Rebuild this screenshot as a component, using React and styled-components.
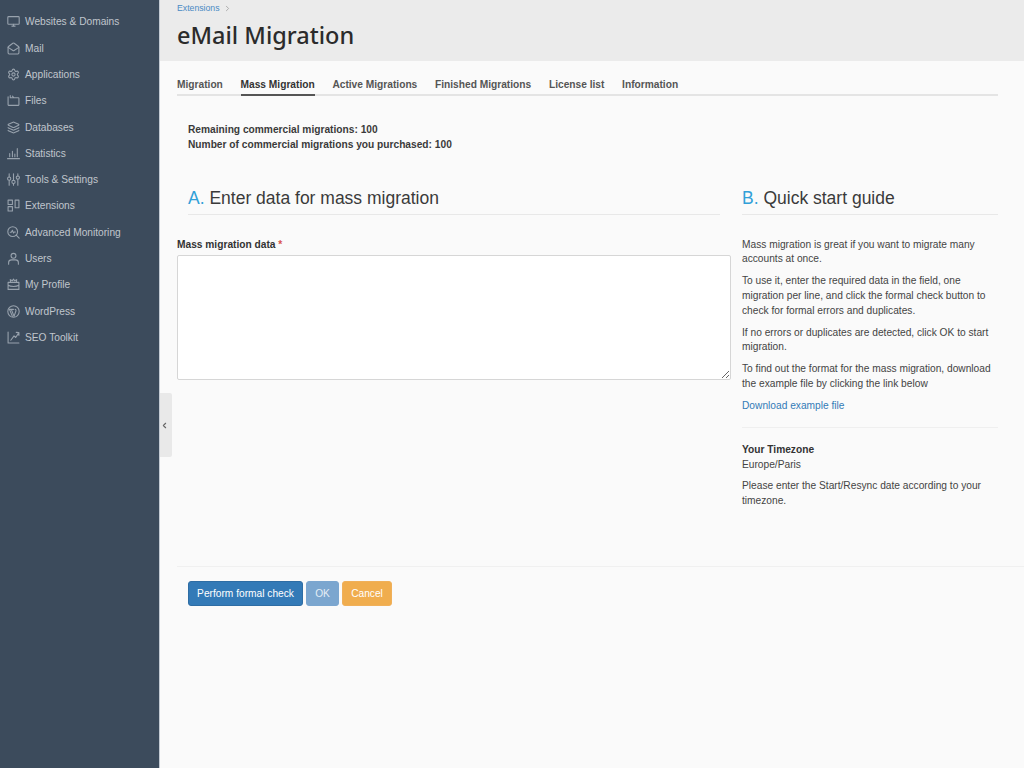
import React from "react";
import styled, { createGlobalStyle } from "styled-components";
import { MailOpen, Settings, Layers, ChevronLeft, ChevronRight } from "lucide-react";

const Global = createGlobalStyle`
  html, body { margin: 0; padding: 0; height: 100%; }
  body { font-family: "Liberation Sans", Arial, sans-serif; font-size: 10.2px; color: #333; background: #fafafa; }
  #root { height: 100%; }
  * { box-sizing: border-box; }
`;
const Page = styled.div`display: flex; width: 1024px; height: 768px; overflow: hidden; position: relative;`;
const Sidebar = styled.nav`
  width: 160px; flex: none; background: #3c4b5c; border-right: 1px solid #c3cad3; padding-top: 8.7px;
  display: flex; flex-direction: column;
`;
const NavItem = styled.a`
  height: 26.3px; display: flex; align-items: center; gap: 5px; padding-left: 7px;
  color: #c0c6cd; font-size: 10.2px; white-space: nowrap;
  svg { color: #98a2ad; flex: none; width: 13px; height: 13px; }
`;
const Main = styled.main`flex: 1; min-width: 0; display: flex; flex-direction: column; position: relative;`;
const Header = styled.header`height: 61px; background: #ebebeb; padding: 3px 17px 0; flex: none;`;
const Crumb = styled.div`
  height: 10px; display: flex; align-items: center; gap: 3px; font-size: 8.7px; color: #4a8ac4;
  svg { color: #999; width: 9px; height: 9px; }
`;
const Title = styled.h1`
  margin: 6px 0 0; font-family: "Noto Sans", "Open Sans", sans-serif; font-weight: 500; font-size: 23.5px; line-height: 32px; color: #2b2b2b;
`;
const Tabs = styled.div`
  display: flex; gap: 17.7px; margin: 16px 26px 0 17px; height: 19px; border-bottom: 2px solid #e4e4e4;
`;
const Tab = styled.a`
  height: 19px; font-weight: 700; font-size: 10.2px; line-height: 16px; color: ${p => (p.$active ? "#333" : "#555")};
  border-bottom: 2px solid ${p => (p.$active ? "#555" : "transparent")}; white-space: nowrap;
`;
const Notice = styled.div`margin: 26px 0 0 28px; font-weight: 700; font-size: 10.2px; line-height: 15px; color: #3a3a3a;`;
const Columns = styled.div`display: flex; margin-top: 34px; padding-left: 17px;`;
const Left = styled.section`width: 554px; flex: none;`;
const Right = styled.aside`width: 256px; margin-left: 11px; flex: none; font-size: 10.2px; line-height: 14.7px; color: #444;`;
const SectionTitle = styled.h2`
  margin: 0; height: 29px; font-weight: 400; font-size: 17.5px; line-height: 24px; color: #3a3a3a; border-bottom: 1px solid #e8e8e8;
  margin-left: ${p => p.$inset || 0}px; margin-right: ${p => p.$inset || 0}px;
  span { color: #31a0d8; }
`;
const FieldLabel = styled.label`display: block; margin-top: 23px; height: 17px; font-weight: 700; font-size: 10.2px; line-height: 14px; color: #333; b { color: #d9534f; }`;
const Area = styled.textarea`
  display: block; width: 554px; height: 125px; background: #fff; border: 1px solid #d6d6d6; border-radius: 2px; resize: vertical;
`;
const Guide = styled.div`margin-top: 22.6px; p { margin: 0 0 7.3px; }`;
const GuideLink = styled.a`color: #337ab7; display: block; margin-top: 6px;`;
const Rule = styled.div`height: 1px; background: #efefef; margin: 13.3px 0 15px;`;
const TzTitle = styled.div`font-weight: 700; color: #333;`;
const TzName = styled.div`margin-bottom: 6.6px;`;
const Footer = styled.div`
  position: absolute; left: 17px; right: 0; top: 566px; border-top: 1px solid #f0f0f0; padding: 14px 0 0 11px; display: flex; gap: 3px;
`;
const Btn = styled.button`
  height: 25px; width: ${p => p.$w}px; padding: 0; border-radius: 3px; border: 1px solid ${p => p.$border}; background: ${p => p.$bg}; color: ${p => p.$fg || "#fff"};
  font: 400 10.2px "Liberation Sans", Arial, sans-serif;
`;
const Collapse = styled.div`
  position: absolute; left: 0; top: 393px; width: 12px; height: 64px; background: #e9e9e9; border-radius: 0 2px 2px 0;
  display: flex; align-items: center; svg { width: 9px; height: 9px; color: #666; }
`;
const Svg = ({ children }) => (
  <svg viewBox="0 0 24 24" fill="none" stroke="currentColor" strokeWidth="2" strokeLinecap="round" strokeLinejoin="round">{children}</svg>
);
const MonitorIcon = () => <Svg><rect x="1.5" y="3" width="21" height="14" rx="1.5" /><path d="M9 20.5h6M12 17v3.5" /></Svg>;
const FilesIcon = () => <Svg><path d="M2 5v15a1 1 0 0 0 1 1h18a1 1 0 0 0 1-1V8a1 1 0 0 0-1-1h-8l-3-3M6 3v4h7" /></Svg>;
const StatsIcon = () => <Svg><path d="M1 21.5h22M5 18v-6M10 18V8M14.5 18v-5M19 18V3" /></Svg>;
const ToolsIcon = () => <Svg><path d="M4 1.5v6M4 14v8.5M12 1.5v12M12 20v2.5M20 1.5v4M20 12v10.5" /><circle cx="4" cy="10.5" r="3" /><circle cx="12" cy="16.5" r="3" /><circle cx="20" cy="8.5" r="3" /></Svg>;
const ExtIcon = () => <Svg><rect x="2" y="2" width="8" height="8" /><rect x="2" y="14" width="8" height="8" /><rect x="15" y="2" width="7" height="14" /></Svg>;
const MonitorSearchIcon = () => <Svg><circle cx="10.5" cy="10.5" r="9" /><path d="M17 17l5.5 5.5M6 11.5h2l2-3.5 2 5 1.5-2h2" /></Svg>;
const UserIcon = () => <Svg><circle cx="12" cy="7" r="4.5" /><path d="M3 22.5v-3c0-3 2.5-5 5.5-5h7c3 0 5.5 2 5.5 5v3" /></Svg>;
const ProfileIcon = () => <Svg><path d="M2 8h20v13H2zM2 13.5c5 3 15 3 20 0M7 8 6 3l4 2 2-3 2 3 4-2-1 5" /></Svg>;
const WpIcon = () => <Svg><circle cx="12" cy="12" r="10.5" /><path d="M4.5 8 10 21M8 8l5 13 3.500-10c.5-1.500-.5-3-1.500-3M6 8h6" /></Svg>;
const SeoIcon = () => <Svg><path d="M2 2v20h20M7 17l6-8 3 3 6-9M17 2.500l5 .5v5" /></Svg>;

const nav = [
  ["Websites & Domains", MonitorIcon], ["Mail", MailOpen], ["Applications", Settings], ["Files", FilesIcon],
  ["Databases", Layers], ["Statistics", StatsIcon], ["Tools & Settings", ToolsIcon], ["Extensions", ExtIcon],
  ["Advanced Monitoring", MonitorSearchIcon], ["Users", UserIcon], ["My Profile", ProfileIcon], ["WordPress", WpIcon], ["SEO Toolkit", SeoIcon],
];
const tabs = ["Migration", "Mass Migration", "Active Migrations", "Finished Migrations", "License list", "Information"];

export default function App() {
  return (
    <Page>
      <Global />
      <Sidebar>
        {nav.map(([label, Icon]) => (
          <NavItem key={label}><Icon />{label}</NavItem>
        ))}
      </Sidebar>
      <Main>
        <Header>
          <Crumb>Extensions <ChevronRight /></Crumb>
          <Title>eMail Migration</Title>
        </Header>
        <Tabs>
          {tabs.map(t => <Tab key={t} $active={t === "Mass Migration"}>{t}</Tab>)}
        </Tabs>
        <Notice>
          Remaining commercial migrations: 100<br />
          Number of commercial migrations you purchased: 100
        </Notice>
        <Columns>
          <Left>
            <SectionTitle $inset={11}><span>A.</span> Enter data for mass migration</SectionTitle>
            <FieldLabel>Mass migration data <b>*</b></FieldLabel>
            <Area />
          </Left>
          <Right>
            <SectionTitle><span>B.</span> Quick start guide</SectionTitle>
            <Guide>
              <p>Mass migration is great if you want to migrate many accounts at once.</p>
              <p>To use it, enter the required data in the field, one migration per line, and click the formal check button to check for formal errors and duplicates.</p>
              <p>If no errors or duplicates are detected, click OK to start migration.</p>
              <p>To find out the format for the mass migration, download the example file by clicking the link below</p>
              <GuideLink>Download example file</GuideLink>
              <Rule />
              <TzTitle>Your Timezone</TzTitle>
              <TzName>Europe/Paris</TzName>
              <p>Please enter the Start/Resync date according to your timezone.</p>
            </Guide>
          </Right>
        </Columns>
        <Footer>
          <Btn $w={115} $bg="#337ab7" $border="#2e6da4">Perform formal check</Btn>
          <Btn $w={33} $bg="#7ba6cf" $border="#7ba6cf" $fg="#e4edf5">OK</Btn>
          <Btn $w={50} $bg="#f0ad4e" $border="#f0b05a">Cancel</Btn>
        </Footer>
        <Collapse><ChevronLeft strokeWidth={3} /></Collapse>
      </Main>
    </Page>
  );
}
